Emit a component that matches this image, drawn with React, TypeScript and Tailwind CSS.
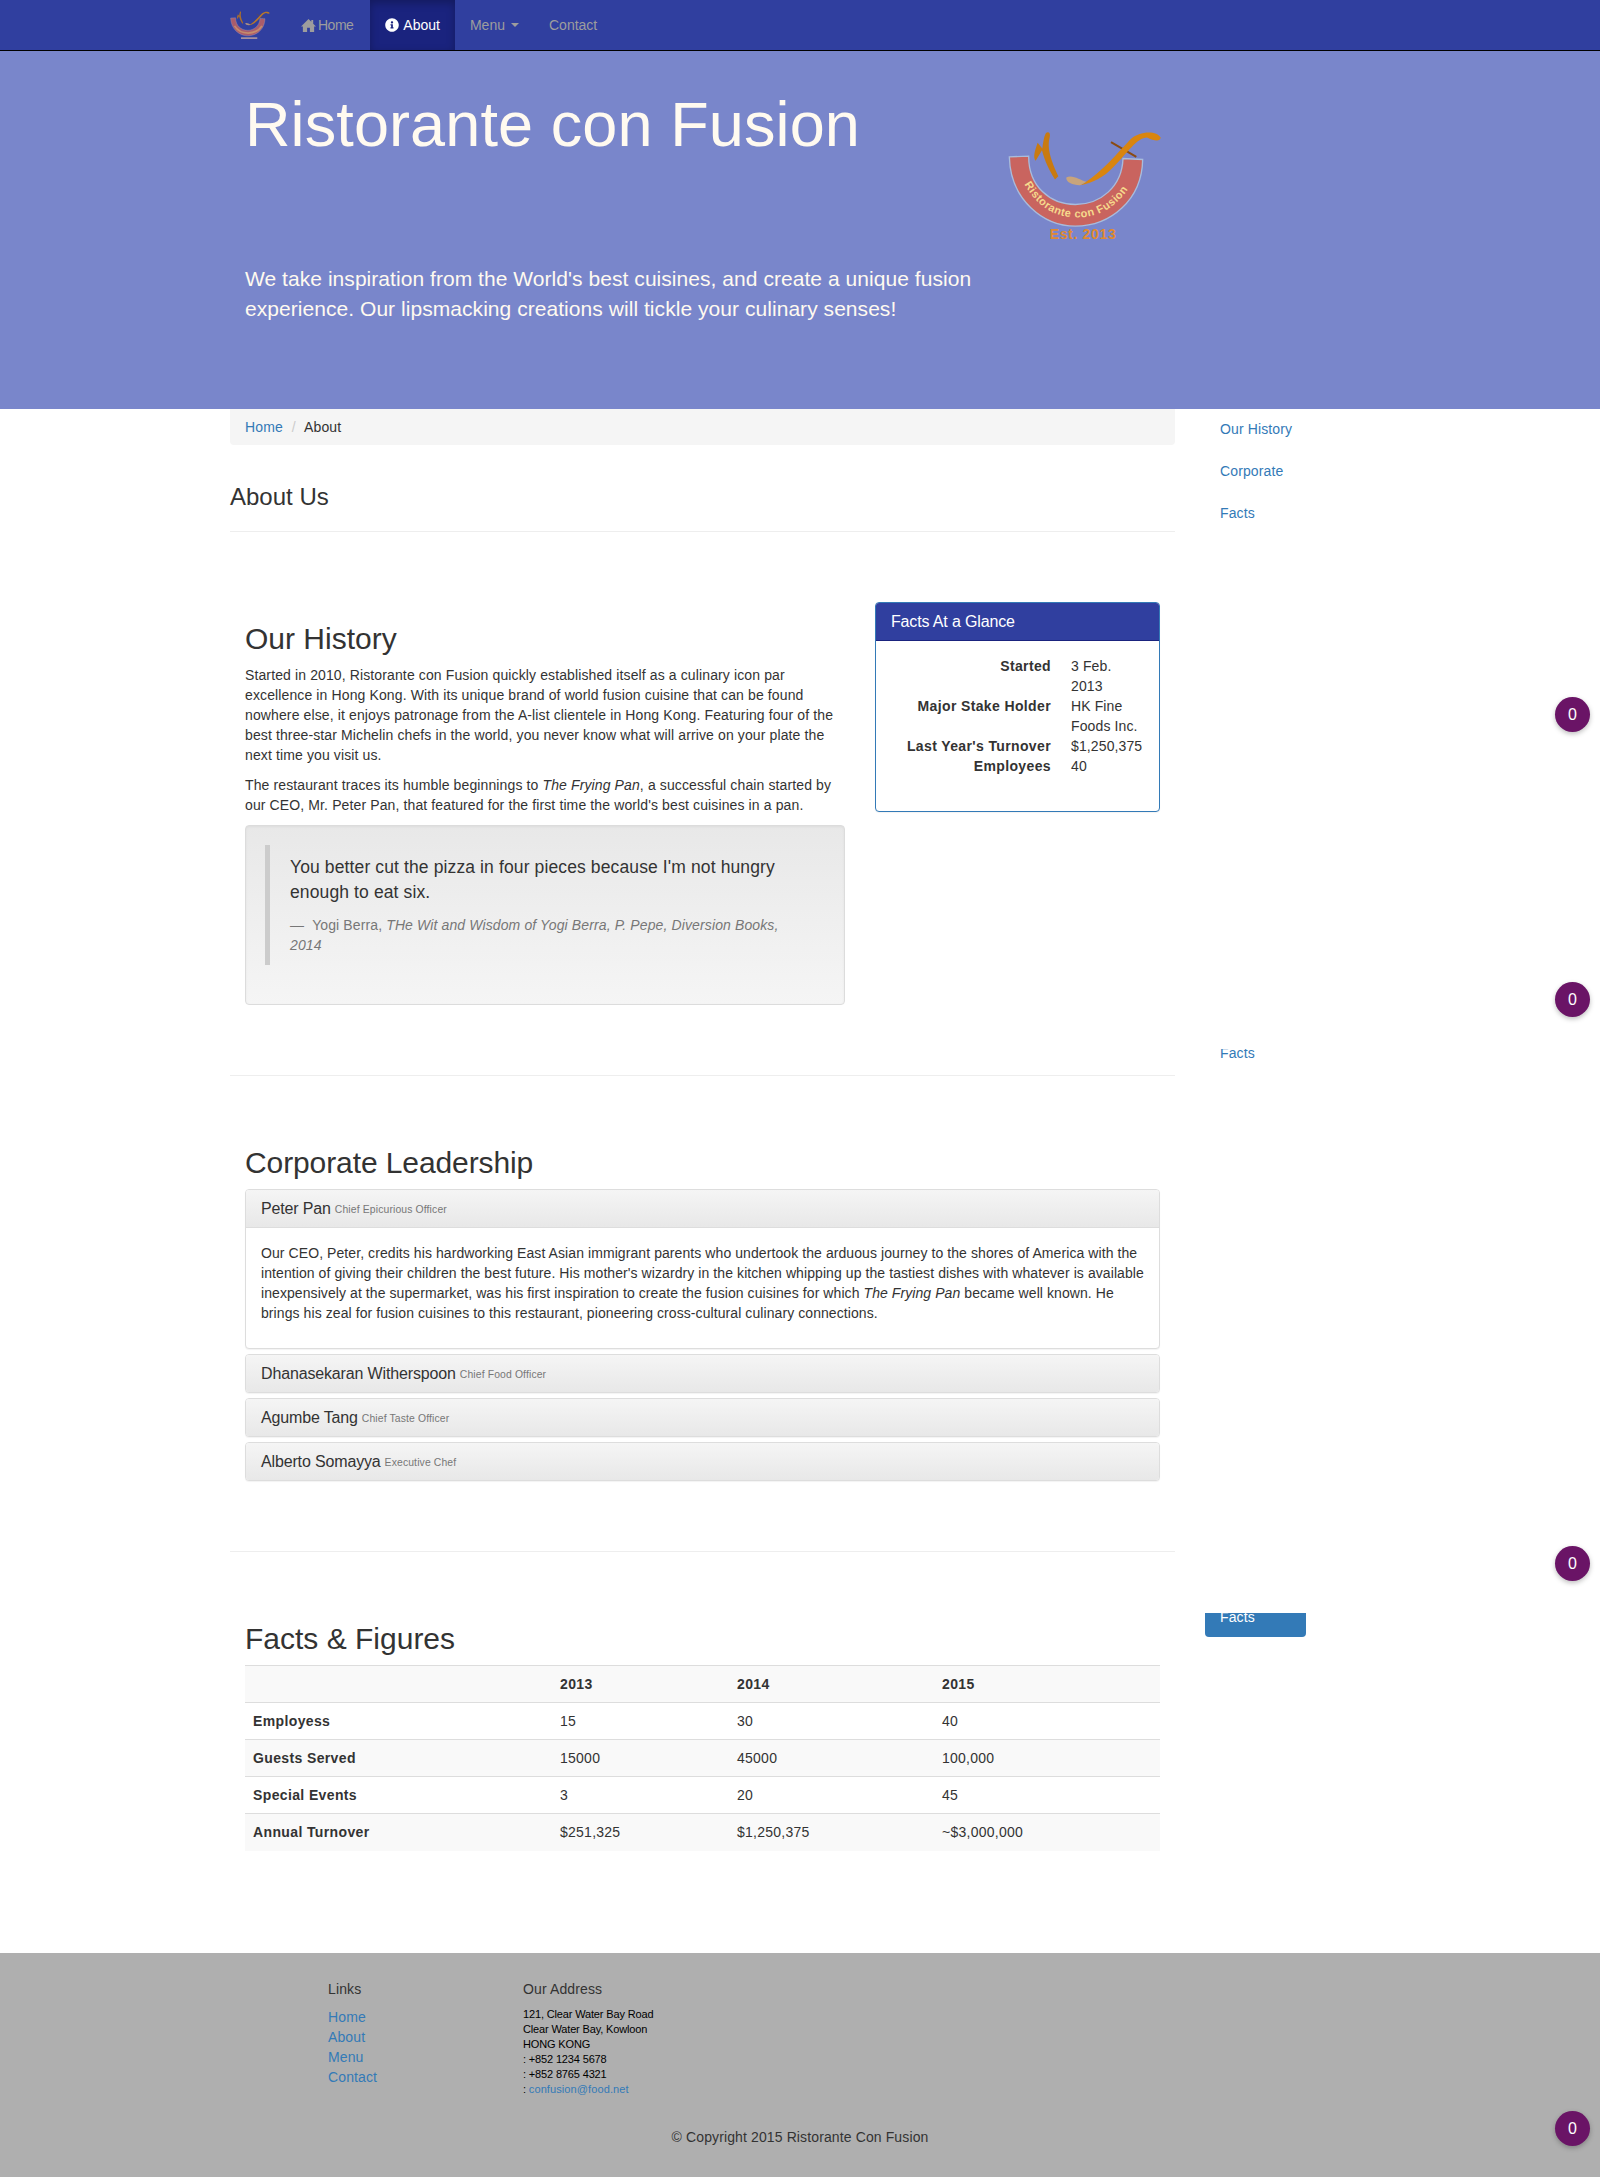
import { FaInfoCircle } from "react-icons/fa";

function HomeIcon() {
  return (
    <svg viewBox="0 0 16 16" className="w-[15px] h-[15px] mr-[2px] fill-current">
      <path d="M8 1 L11 4 L11 2 L13 2 L13 6 L16 9 L14 9 L14 15 L9.5 15 L9.5 10.5 L6.5 10.5 L6.5 15 L2 15 L2 9 L0 9 Z" />
    </svg>
  );
}

function Logo({ small = false }: { small?: boolean }) {
  return (
    <svg viewBox="140 90 465 335" className={small ? "w-[40px] h-[29px] opacity-80" : "w-[155px] h-[112px]"}>
      <defs>
        <path id="logo-arc" d="M192 252 C 240 335, 300 352, 350 352 C 410 352, 470 325, 512 252" fill="none" />
      </defs>
      <path
        d="M147 170 C 150 300, 250 378, 345 378 C 450 378, 545 300, 547 178 L 488 175 C 485 260, 420 313, 345 313 C 270 313, 205 260, 205 168 Z"
        fill="#c9645f"
        stroke="#a8bcdc"
        strokeWidth="4"
      />
      {small ? (
        <path d="M192 262 C 240 335, 300 345, 350 345 C 410 345, 470 325, 512 262" fill="none" stroke="#e8a060" strokeWidth="20" />
      ) : (
        <text fontFamily="'Liberation Sans', sans-serif" fontWeight="700" fontSize="33" fill="#f6d98c" letterSpacing="1.5">
          <textPath href="#logo-arc">Ristorante con Fusion</textPath>
        </text>
      )}
      {/* chopstick + spoon */}
      <path
        d="M256 100 C 262 92 272 96 268 112 C 262 135 264 165 294 228 L 284 238 C 268 212 252 180 245 150 L 226 182 C 218 172 222 155 232 128 L 246 145 C 248 130 250 112 256 100 Z"
        fill="#c97a10"
      />
      <path d="M452 126 L 528 170" stroke="#8a4b12" strokeWidth="6" />
      <path
        d="M375 246 C 425 215 470 160 510 118 C 540 90 590 92 601 112 C 600 126 580 122 560 112 C 530 112 500 160 460 200 C 430 232 395 250 360 255 Z"
        fill="#d9850f"
      />
      <path d="M318 232 C 335 222 360 240 378 245 L 360 255 C 340 256 315 246 318 232 Z" fill="#c8a47c" />
      {small ? (
        <path d="M268 404 L 457 404" stroke="#e8c0a0" strokeWidth="16" />
      ) : (
        <text x="268" y="416" fontFamily="'Liberation Sans', sans-serif" fontWeight="700" fontSize="42" fill="#e08a2e" letterSpacing="2">
          Est. 2013
        </text>
      )}
    </svg>
  );
}

function Badge({ top }: { top: string }) {
  return (
    <div className={`absolute left-[1555px] ${top} w-[35px] h-[35px] rounded-full bg-[#6a1466] text-white text-[16px] flex items-center justify-center shadow-[0_2px_5px_rgba(0,0,0,0.26)]`}>
      0
    </div>
  );
}

function Leader({ name, title, children }: { name: string; title: string; children?: React.ReactNode }) {
  return (
    <div className="border border-[#ddd] rounded-[4px] bg-white shadow-[0_1px_1px_rgba(0,0,0,0.05)] overflow-hidden">
      <div className={`px-[15px] flex items-center bg-gradient-to-b from-[#f5f5f5] to-[#e8e8e8] text-[16px] tracking-[-0.15px] text-[#333] ${children ? "h-[38px] border-b border-[#ddd]" : "h-[37px]"}`}>
        {name}
        <span className="ml-[4px] mt-[3px] text-[10.4px] tracking-[0.13px] text-[#777]">{title}</span>
      </div>
      {children && <div className="h-[120px] p-[15px]">{children}</div>}
    </div>
  );
}

const facts = [
  ["Employess", "15", "30", "40"],
  ["Guests Served", "15000", "45000", "100,000"],
  ["Special Events", "3", "20", "45"],
  ["Annual Turnover", "$251,325", "$1,250,375", "~$3,000,000"],
];

export default function App() {
  return (
    <div className="relative text-[14px] leading-[20px] tracking-[0.12px] text-[#333] bg-white font-['Liberation_Sans',Arial,sans-serif]">
      <nav className="h-[51px] bg-[#303f9f] border-b border-black tracking-normal">
        <div className="mx-auto w-[1170px] h-[50px] flex pl-[15px]">
          <div className="w-[56px] flex items-center">
            <Logo small />
          </div>
          <a className="pl-[15px] pr-[17px] flex items-center text-[#9d9d9d]">
            <HomeIcon /> <span className="tracking-[-0.5px]">Home</span>
          </a>
          <a className="px-[15px] flex items-center text-white bg-[#1a237e] shadow-[inset_0_3px_9px_rgba(0,0,0,0.25)]">
            <FaInfoCircle className="w-[14px] h-[14px] mr-[4px]" /> About
          </a>
          <a className="px-[15px] flex items-center text-[#9d9d9d]">
            Menu
            <span className="ml-[6px] w-0 h-0 border-x-4 border-t-4 border-x-transparent border-t-[#9d9d9d]" />
          </a>
          <a className="px-[15px] flex items-center text-[#9d9d9d]">Contact</a>
        </div>
      </nav>

      <header className="h-[358px] bg-[#7986cb] text-[#fffaf0]">
        <div className="mx-auto w-[1170px] flex">
          <div className="w-[780px] pl-[30px] pr-[20px] pt-[39px]">
            <h1 className="text-[63px] leading-[69.3px] tracking-[0.1px]">Ristorante con Fusion</h1>
            <p className="mt-[105px] text-[21px] leading-[30px] tracking-[0.05px]">
              We take inspiration from the World's best cuisines, and create a unique fusion experience. Our lipsmacking creations will tickle your culinary senses!
            </p>
          </div>
          <div className="ml-[12px] mt-[79px]">
            <Logo />
          </div>
        </div>
      </header>

      <div className="mx-auto w-[1170px] flex">
        <main className="w-[975px] px-[15px]">
          <ol className="h-[36px] px-[15px] py-[8px] bg-[#f5f5f5] rounded-b-[4px]">
            <a className="text-[#337ab7]">Home</a> <span className="px-[5px] text-[#ccc]">/</span> About
          </ol>
          <div className="mt-[38px] pb-[21px] border-b border-[#eee]">
            <h3 className="text-[24px] leading-[27px] tracking-normal">About Us</h3>
          </div>

          <section className="mt-[70px] flex">
            <div className="w-[630px] px-[15px] pt-[20px]">
              <h2 className="text-[30px] leading-[33px] tracking-normal mb-[10px]">Our History</h2>
              <p className="mb-[10px]">
                Started in 2010, Ristorante con Fusion quickly established itself as a culinary icon par excellence in Hong Kong. With its unique brand of world fusion cuisine that can be found nowhere else, it enjoys patronage from the A-list clientele in Hong Kong. Featuring four of the best three-star Michelin chefs in the world, you never know what will arrive on your plate the next time you visit us.
              </p>
              <p className="mb-[10px]">
                The restaurant traces its humble beginnings to <em>The Frying Pan</em>, a successful chain started by our CEO, Mr. Peter Pan, that featured for the first time the world's best cuisines in a pan.
              </p>
              <div className="p-[19px] border border-[#dcdcdc] rounded-[4px] bg-gradient-to-b from-[#e8e8e8] to-[#f5f5f5] shadow-[inset_0_1px_3px_rgba(0,0,0,0.05)]">
                <blockquote className="mb-[20px] px-[20px] py-[10px] border-l-[5px] border-[#ccc]">
                  <p className="mb-[10px] text-[17.5px] leading-[25px]">You better cut the pizza in four pieces because I'm not hungry enough to eat six.</p>
                  <footer className="text-[#777]">
                    — &nbsp;Yogi Berra, <cite>THe Wit and Wisdom of Yogi Berra, P. Pepe, Diversion Books, 2014</cite>
                  </footer>
                </blockquote>
              </div>
            </div>
            <div className="w-[315px] px-[15px]">
              <div className="border border-[#337ab7] rounded-[4px] overflow-hidden bg-white shadow-[0_1px_1px_rgba(0,0,0,0.05)]">
                <div className="h-[38px] px-[15px] flex items-center bg-[#303f9f] border-b border-[#1a237e] text-white text-[16px] tracking-[-0.15px]">Facts At a Glance</div>
                <dl className="p-[15px] pb-[35px] grid grid-cols-[160px_1fr] gap-x-[20px]">
                  <dt className="font-bold tracking-[0.37px] text-right">Started</dt>
                  <dd>3 Feb. 2013</dd>
                  <dt className="font-bold tracking-[0.37px] text-right">Major Stake Holder</dt>
                  <dd>HK Fine Foods Inc.</dd>
                  <dt className="font-bold tracking-[0.37px] text-right">Last Year's Turnover</dt>
                  <dd>$1,250,375</dd>
                  <dt className="font-bold tracking-[0.37px] text-right">Employees</dt>
                  <dd>40</dd>
                </dl>
              </div>
            </div>
          </section>

          <hr className="mt-[70px] border-t border-[#eee]" />

          <section className="mt-[70px] px-[15px]">
            <h2 className="text-[30px] leading-[33px] tracking-[-0.1px] mb-[10px]">Corporate Leadership</h2>
            <div className="flex flex-col gap-[5px]">
              <Leader name="Peter Pan" title="Chief Epicurious Officer">
                <p className="tracking-[0.08px]">
                  Our CEO, Peter, credits his hardworking East Asian immigrant parents who undertook the arduous journey to the shores of America with the intention of giving their children the best future. His mother's wizardry in the kitchen whipping up the tastiest dishes with whatever is available inexpensively at the supermarket, was his first inspiration to create the fusion cuisines for which <em>The Frying Pan</em> became well known. He brings his zeal for fusion cuisines to this restaurant, pioneering cross-cultural culinary connections.
                </p>
              </Leader>
              <Leader name="Dhanasekaran Witherspoon" title="Chief Food Officer" />
              <Leader name="Agumbe Tang" title="Chief Taste Officer" />
              <Leader name="Alberto Somayya" title="Executive Chef" />
            </div>
          </section>

          <hr className="mt-[70px] border-t border-[#eee]" />

          <section className="mt-[70px] px-[15px]">
            <h2 className="text-[30px] leading-[33px] tracking-normal mb-[10px]">Facts &amp; Figures</h2>
            <table className="w-full table-fixed border-collapse tracking-[0.25px]">
              <thead>
                <tr className="h-[37px] border-t border-[#ddd] bg-[#f9f9f9] font-bold text-left tracking-[0.37px]">
                  <th className="w-[307px]" />
                  <th className="w-[177px] px-[8px]">2013</th>
                  <th className="w-[205px] px-[8px]">2014</th>
                  <th className="px-[8px]">2015</th>
                </tr>
              </thead>
              <tbody>
                {facts.map((row, i) => (
                  <tr key={row[0]} className={`h-[37px] border-t border-[#ddd] ${i % 2 === 1 ? "bg-[#f9f9f9]" : ""}`}>
                    <th className="px-[8px] text-left font-bold tracking-[0.37px]">{row[0]}</th>
                    <td className="px-[8px]">{row[1]}</td>
                    <td className="px-[8px]">{row[2]}</td>
                    <td className="px-[8px]">{row[3]}</td>
                  </tr>
                ))}
              </tbody>
            </table>
          </section>
        </main>

        <aside className="w-[195px] pl-[15px] text-[#337ab7] whitespace-nowrap">
          <a className="block w-[101px] px-[15px] py-[10px]">Our History</a>
          <a className="block w-[101px] mt-[2px] px-[15px] py-[10px]">Corporate</a>
          <a className="block w-[101px] mt-[2px] px-[15px] py-[10px]">Facts</a>
          <div className="mt-[516px] w-[101px] h-[14px] overflow-hidden">
            <a className="block -mt-[6px] px-[15px]">Facts</a>
          </div>
          <div className="mt-[550px] w-[101px] h-[24px] overflow-hidden rounded-b-[4px] bg-[#337ab7] text-white">
            <a className="block -mt-[6px] px-[15px]">Facts</a>
          </div>
        </aside>
      </div>

      <footer className="mt-[102px] h-[225px] bg-[#afafaf] pt-[29px]">
        <div className="mx-auto w-[1170px]">
          <div className="flex pl-[113px]">
            <div className="w-[195px]">
              <h5 className="leading-[15.4px] mb-[10px]">Links</h5>
              <ul className="text-[#337ab7]">
                <li>Home</li>
                <li>About</li>
                <li>Menu</li>
                <li>Contact</li>
              </ul>
            </div>
            <div>
              <h5 className="leading-[15.4px] mb-[10px]">Our Address</h5>
              <address className="not-italic text-[11px] leading-[15px] tracking-[-0.15px] text-black">
                121, Clear Water Bay Road
                <br />
                Clear Water Bay, Kowloon
                <br />
                HONG KONG
                <br />: +852 1234 5678
                <br />: +852 8765 4321
                <br />: <a className="text-[#337ab7] tracking-[0.1px]">confusion@food.net</a>
              </address>
            </div>
          </div>
          <p className="mt-[30px] text-center">© Copyright 2015 Ristorante Con Fusion</p>
        </div>
      </footer>

      <Badge top="top-[697px]" />
      <Badge top="top-[982px]" />
      <Badge top="top-[1546px]" />
      <Badge top="top-[2111px]" />
    </div>
  );
}
